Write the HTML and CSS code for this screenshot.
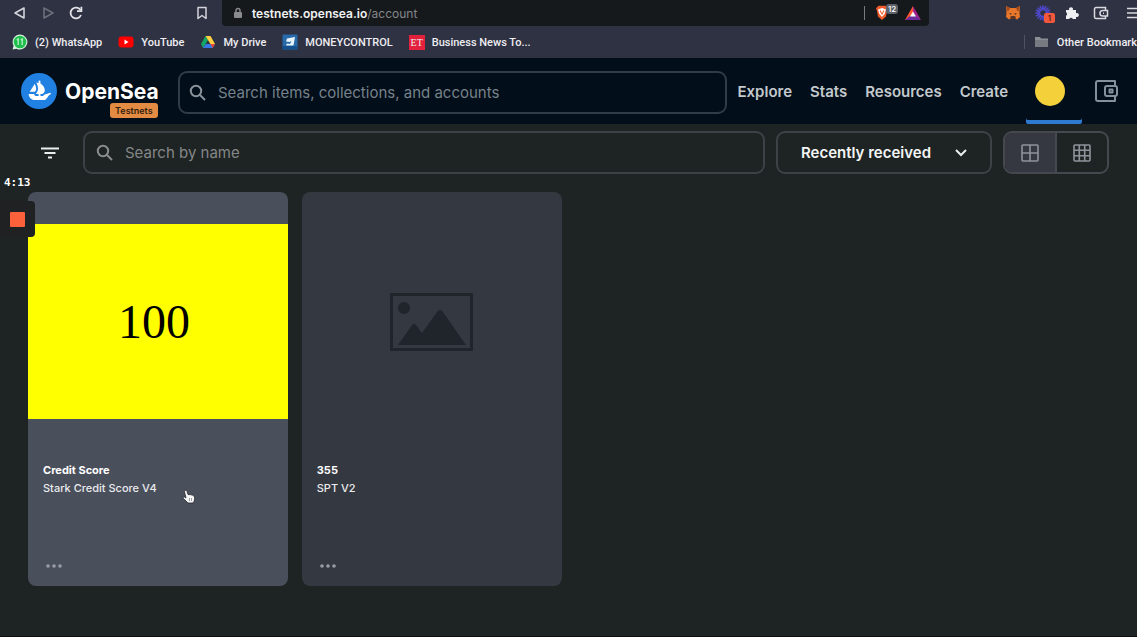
FILE: index.html
```html
<!DOCTYPE html>
<html lang="en">
<head>
<meta charset="utf-8">
<meta name="viewport" content="width=device-width, initial-scale=1">
<title>Account | OpenSea Testnets</title>
<link rel="stylesheet" href="styles.css">
</head>
<body>
<div class="browser">
  <div class="toolbar">
    <div class="history">
      <button class="tool" aria-label="Back"><svg width="14" height="14" viewBox="0 0 14 14" fill="none" stroke="#d3d4da" stroke-width="1.6" stroke-linejoin="round"><path d="M11 2v10L2 7z"/></svg></button>
      <button class="tool" aria-label="Forward"><svg width="14" height="14" viewBox="0 0 14 14" fill="none" stroke="#6c6e7b" stroke-width="1.6" stroke-linejoin="round"><path d="M3 2v10l9-5z"/></svg></button>
      <button class="tool" aria-label="Reload"><svg width="14" height="14" viewBox="0 0 14 14" fill="none" stroke="#e2e3e8" stroke-width="1.8"><path d="M12 9A5.400 5.400 0 1 1 11.500 4"/><path d="M12.400.8v4.400H8"/></svg></button>
    </div>
    <button class="tool" aria-label="Bookmark this page"><svg width="14" height="14" viewBox="0 0 14 14" fill="none" stroke="#d3d4da" stroke-width="1.5" stroke-linejoin="round"><path d="M3 1.500h8v11L7 9.500l-4 3z"/></svg></button>
    <div class="address">
      <svg width="10" height="12" viewBox="0 0 10 12"><rect x="1" y="5" width="8" height="6" rx="1" fill="#898b90"/><path d="M3 5V3.500a2 2 0 0 1 4 0V5" fill="none" stroke="#898b90" stroke-width="1.4"/></svg>
      <span class="url"><span class="host">testnets.opensea.io</span>/account</span>
      <span class="divider"></span>
      <span class="shield">
        <svg width="14" height="16" viewBox="0 0 14 16"><path d="M3.500.8h7L13 3.200l-.8 2L11 11.500 7 15 3 11.500 1.800 5.200 1 3.200z" fill="#f05a2b"/><path d="M3 4.500 7 3l4 1.500-1.300 4.300L7 12 4.300 8.800z" fill="#fff"/><path d="m5 5.500 2 3.700 2-3.700" fill="none" stroke="#f05a2b" stroke-width="1.100"/></svg>
        <span class="count">12</span>
      </span>
      <svg width="16" height="14" viewBox="0 0 16 14"><path d="M8 0 0 14h8z" fill="#ff5631"/><path d="m8 0 8 14-8-4z" fill="#a2218d"/><path d="M0 14h16l-5-4H5z" fill="#6b2b9a"/><path d="m8 5.500 3 5H5z" fill="#fff"/></svg>
    </div>
    <div class="extensions">
      <svg width="16" height="16" viewBox="0 0 16 16"><path d="M1 1l4 2h6l4-2-.5 7 .5 4-3 2.500-2-1H6l-2 1L1 12l.5-4z" fill="#e8762b"/><path d="M1 1l4 2-1.500 3L2 6zM15 1l-4 2 1.500 3L14 6z" fill="#a84c1c"/><path d="M6 11h4l1 2-1 1H6l-1-1z" fill="#5b3423"/><path d="M4 8l2.500.5-.5 1.500zM12 8l-2.500.5.5 1.500z" fill="#3a2a25"/></svg>
      <span class="burst">
        <svg width="16" height="16" viewBox="0 0 16 16" fill="none" stroke="#4f49cf" stroke-width="1.600" stroke-linecap="round"><circle cx="8" cy="8" r="3.500"/><path d="M8 1v3M8 12v3M1 8h3M12 8h3M3 3l2 2M11 11l2 2M13 3l-2 2M5 11l-2 2M5.300 1.500l1.200 2.500M10.700 1.500 9.500 4M1.500 5.300 4 6.500M1.500 10.700 4 9.500M14.500 5.300 12 6.500M5.300 14.500 6.500 12"/></svg>
        <span class="alert">1</span>
      </span>
      <svg width="14" height="14" viewBox="0 0 14 14" fill="#eeeff2"><path d="M1 4h3.200a2 2 0 1 1 3.600 0H11v3.200a2 2 0 1 1 0 3.600V13H7.800a2 2 0 0 0-3.600 0H1V9.800a2 2 0 0 0 0-3.600z"/></svg>
      <svg width="16" height="14" viewBox="0 0 16 14" fill="none" stroke="#d9dae0" stroke-width="1.500"><path d="M12.500 4.500V1.500H3A1.500 1.500 0 0 0 1.500 3v8A1.500 1.500 0 0 0 3 12.500h9.500V10"/><path d="M14.500 4.500V10H9.700a2.700 2.700 0 0 1 0-5.500z"/><path d="M10 7.200h1"/></svg>
      <svg class="menu" width="12" height="14" viewBox="0 0 12 14" stroke="#d9dae0" stroke-width="1.500"><path d="M0 2.500h12M0 7h12M0 11.500h12"/></svg>
    </div>
  </div>
  <nav class="bookmarks" aria-label="Bookmarks">
    <a href="#"><svg width="16" height="16" viewBox="0 0 16 16"><path d="M8 .5A7.500 7.500 0 1 1 4.500 14.700L.6 15.500l1-3.800A7.500 7.500 0 0 1 8 .5z" fill="#d8f5df"/><circle cx="8" cy="8" r="6.300" fill="#22bf4e"/><path d="m4.800 6 1.400-1v6M8.800 6l1.400-1v6" fill="none" stroke="#b9f3c8" stroke-width="1.200"/></svg>(2) WhatsApp</a>
    <a href="#"><svg width="16" height="16" viewBox="0 0 16 16"><rect y="2.500" x=".5" width="15" height="11" rx="3" fill="#f00"/><path d="m6.500 5.500 4 2.500-4 2.500z" fill="#fff"/></svg>YouTube</a>
    <a href="#"><svg width="16" height="16" viewBox="0 0 16 16"><path d="M5.500 2 1 10l2 4 5-8z" fill="#16a765"/><path d="M5.500 2h5L15 10h-4.600z" fill="#ffcf42"/><path d="M5.600 10H15l-2.300 4H3z" fill="#3777e3"/><path d="M12.700 14 10.400 10H15z" fill="#ea4335"/></svg>My Drive</a>
    <a href="#"><svg width="16" height="16" viewBox="0 0 16 16"><rect x=".5" y=".5" width="15" height="15" rx="1" fill="#286baa"/><path d="M.5 12h15v3.500H.5z" fill="#14518c"/><path d="M5 4.500 13 3l-1.500 8.500H4l1-2 3 .5 1.500-3-2 1-3.500-.5z" fill="#e9f3fa"/></svg>MONEYCONTROL</a>
    <a href="#"><span class="et">ET</span>Business News To...</a>
    <a href="#" class="other"><svg width="16" height="14" viewBox="0 0 16 14"><path d="M1 2h5l1 1.500h7V12H1z" fill="#8b8e95"/><path d="M1 5h13v7H1z" fill="#777a81"/></svg>Other Bookmark</a>
  </nav>
</div>

<header class="site-header">
  <a href="#" class="brand">
    <svg class="brand-logo" width="36" height="36" viewBox="0 0 90 90"><circle cx="45" cy="45" r="45" fill="#2081e2"/><g fill="#fff"><path d="m22.200 46.500 12-18.700c.2-.3.500-.3.700.1 2 4.400 3.600 9.800 2.800 13.200-.4 1.600-1.600 4-2.800 5.900H22.500c-.3 0-.5-.3-.3-.5z"/><path d="M74.400 49.900v2.900c0 .2-.1.300-.3.400-.9.400-4 1.800-5.200 3.600-3.300 4.500-5.800 11-11.400 11H34.200c-8.300 0-15-6.700-15-15v-.2c0-.2.200-.4.400-.4h13c.3 0 .5.200.5.500-.1.800 0 1.700.4 2.500.8 1.500 2.400 2.500 4.100 2.500H44v-5h-6.400c-.3 0-.5-.4-.3-.6 1.700-2.500 5.300-8.500 5.300-13 0-6-2.200-11.300-4.500-15.600l5.900 1.700v-4a2.300 2.300 0 0 1 4.600 0v5.300c5.500 3.800 11 9.700 11 16.500 0 4.500-3.800 8.300-6.300 9.700h-4.700v5h4c.9 0 2.500-.2 3.300-1 .4-.4 1.700-1.500 3.200-3.200l15-4.300c.2 0 .3.200.3.700z"/></g></svg>
    <span class="brand-name">OpenSea<span class="badge">Testnets</span></span>
  </a>
  <label class="field global-search">
    <svg width="20" height="20" viewBox="0 0 20 20" fill="none" stroke="#8a939b" stroke-width="2"><circle cx="8" cy="8" r="5.200"/><path d="m12 12 5 5"/></svg>
    <input type="text" aria-label="Search OpenSea" placeholder="Search items, collections, and accounts">
  </label>
  <nav class="site-nav" aria-label="Main">
    <a href="#">Explore</a>
    <a href="#">Stats</a>
    <a href="#">Resources</a>
    <a href="#">Create</a>
  </nav>
  <a href="#" class="profile" aria-label="Account"><span class="avatar"></span></a>
  <button class="wallet" aria-label="Wallet"><svg width="24" height="24" viewBox="0 0 24 24" fill="none" stroke="#84919b" stroke-width="2" stroke-linejoin="round"><path d="M21 7V2H4a2 2 0 0 0-2 2v16a2 2 0 0 0 2 2h17v-5"/><rect x="11" y="7" width="12" height="10" rx="2"/><path d="M15.500 10.500h3v3h-3z"/></svg></button>
</header>

<main class="content">
  <div class="filters">
    <button class="filter" aria-label="Filter"><svg width="18" height="12" viewBox="0 0 18 12" stroke="#e9eded" stroke-width="2"><path d="M0 1.500h18M3.500 6h11M7 10.500h4"/></svg></button>
    <label class="field name-search">
      <svg width="20" height="20" viewBox="0 0 20 20" fill="none" stroke="#8a8d8e" stroke-width="2"><circle cx="8" cy="8" r="5.200"/><path d="m12 12 5 5"/></svg>
      <input type="text" aria-label="Search by name" placeholder="Search by name">
    </label>
    <div class="sort">
      <select aria-label="Sort by"><option>Recently received</option></select>
      <svg width="12" height="8" viewBox="0 0 12 8" fill="none" stroke="#e9eded" stroke-width="2"><path d="m1 1 5 5 5-5"/></svg>
    </div>
    <div class="views">
      <button class="view active" aria-label="Large grid" aria-pressed="true"><svg width="18" height="18" viewBox="0 0 18 18" fill="none" stroke="#8f949c" stroke-width="1.600"><rect x="1" y="1" width="16" height="16" rx="1"/><path d="M9 1v16M1 9h16"/></svg></button>
      <button class="view" aria-label="Small grid" aria-pressed="false"><svg width="18" height="18" viewBox="0 0 18 18" fill="none" stroke="#8f949c" stroke-width="1.600"><rect x="1" y="1" width="16" height="16" rx="1"/><path d="M6.300 1v16M11.700 1v16M1 6.300h16M1 11.700h16"/></svg></button>
    </div>
  </div>

  <section class="cards" aria-label="Collected items">
    <article class="card hovered">
      <div class="media"><div class="score">100</div></div>
      <div class="info">
        <h2>Credit Score</h2>
        <p>Stark Credit Score V4</p>
        <button class="more" aria-label="More options"><svg width="16" height="4" viewBox="0 0 16 4" fill="#9a9da5"><circle cx="2" cy="2" r="1.800"/><circle cx="8" cy="2" r="1.800"/><circle cx="14" cy="2" r="1.800"/></svg></button>
      </div>
      <svg class="cursor" width="14" height="16" viewBox="0 0 14 16"><path d="M3 1.500c1-.6 1.700 0 2 .8l1 3.200c3 0 6 .5 6.500 2.500.3 2 .2 4-1.500 6H6L1.200 9.200c-.5-.9.500-1.600 1.300-1.200L4 9 2.500 3c-.2-.7 0-1.200.5-1.500z" fill="#f5f5f5" stroke="#24262b" stroke-width=".8"/><path d="M7.500 9v3M9.500 9v3" stroke="#777b84" stroke-width=".7"/></svg>
    </article>
    <article class="card">
      <div class="media"><svg width="83" height="58" viewBox="0 0 83 58"><rect x="1.500" y="1.500" width="80" height="55" fill="none" stroke="#20252b" stroke-width="3"/><circle cx="14" cy="15" r="6" fill="#20252b"/><path d="m8 52 14-20q2-3 4 0l6 8 15-21q3-4 6 0l23 33z" fill="#20252b"/></svg></div>
      <div class="info">
        <h2>355</h2>
        <p>SPT V2</p>
        <button class="more" aria-label="More options"><svg width="16" height="4" viewBox="0 0 16 4" fill="#9a9da5"><circle cx="2" cy="2" r="1.800"/><circle cx="8" cy="2" r="1.800"/><circle cx="14" cy="2" r="1.800"/></svg></button>
      </div>
    </article>
  </section>
</main>

<div class="recorder">
  <span class="time">4:13</span>
  <button class="stop" aria-label="Stop recording"><span></span></button>
</div>
</body>
</html>
```
FILE: styles.css
```css
* { box-sizing: border-box; }
body {
  margin: 0;
  min-height: 100vh;
  overflow-x: hidden;
  background: #1e2323;
  color: #fff;
  font-family: Inter, "Open Sans", sans-serif;
  border-bottom: 1px solid #0b0e0f;
}
button { margin: 0; padding: 0; border: 0; background: none; color: inherit; font: inherit; }
a { color: inherit; text-decoration: none; }
svg { display: block; flex: none; }

/* browser window */
.browser { height: 58px; background: #2f3242; overflow: hidden; font-size: 11px; font-weight: 500; }
.toolbar { display: flex; align-items: center; height: 26px; }
.history { display: flex; gap: 14px; padding-left: 13px; margin-right: 112px; }
.address {
  display: flex;
  align-items: center;
  flex: 1;
  height: 26px;
  margin-left: 13px;
  padding: 0 8px 0 11px;
  border-radius: 0 0 4px 4px;
  background: #16191c;
}
.url { flex: 1; margin-left: 9px; font-size: 12px; font-weight: 400; color: #85878b; }
.host { color: #f1f2f3; font-weight: 600; }
.divider { width: 1px; height: 14px; margin-right: 10px; background: #777a80; }
.shield { position: relative; margin-right: 16px; }
.count {
  position: absolute;
  left: 11px;
  top: -1px;
  padding: 0 2px;
  border-radius: 3px;
  background: #5c616b;
  font-size: 8px;
  line-height: 10px;
}
.extensions { display: flex; align-items: center; gap: 14px; margin-left: 76px; width: 132px; overflow: hidden; height: 26px; }
.extensions .menu { margin-left: 4px; }
.burst { position: relative; }
.alert {
  position: absolute;
  left: 9px;
  top: 8px;
  width: 11px;
  border-radius: 2px;
  background: #f1583c;
  color: #47150d;
  text-align: center;
  font-size: 8px;
  line-height: 10px;
}
.bookmarks {
  display: flex;
  align-items: center;
  gap: 16px;
  height: 32px;
  padding-left: 12px;
  white-space: nowrap;
  color: #eeeef2;
  font-family: Roboto, sans-serif;
  font-size: 11px;
}
.bookmarks a { display: flex; align-items: center; gap: 7px; flex: none; }
.et { width: 16px; background: #e3213c; font: 10px/15px "Liberation Serif", serif; text-align: center; }
.bookmarks .other { margin-left: auto; padding-left: 9px; border-left: 1px solid #50525f; }

/* site header */
.site-header { display: flex; align-items: center; height: 66px; padding: 0 19px 0 21px; background: #020e19; }
.brand { display: flex; align-items: center; gap: 8px; width: 157px; }
.brand-name { position: relative; font-size: 21px; font-weight: 700; }
.badge {
  position: absolute;
  right: 1px;
  top: 24px;
  padding: 0 5px;
  border-radius: 3px;
  background: #e38b42;
  color: #33200f;
  font-size: 9px;
  font-weight: 600;
  line-height: 15px;
}
.field { display: flex; align-items: center; gap: 10px; height: 43px; padding: 0 10px; border: 2px solid #3d4246; border-radius: 9px; }
.field input { flex: 1; min-width: 0; padding: 0; border: 0; outline: 0; background: none; color: #fff; font: 400 15px/20px Inter, sans-serif; }
.field input::placeholder { color: #858789; opacity: 1; }
.global-search { flex: 1; margin-top: 3px; padding: 0 8px; border-color: #2f3d47; }
.global-search input::placeholder { color: #77828b; }
.site-nav { display: flex; gap: 18px; padding-left: 10px; font-size: 15px; font-weight: 600; color: #c4c9cd; }
.profile { display: flex; align-items: center; justify-content: center; width: 56px; height: 66px; margin: 0 12px 0 18px; padding-right: 8px; box-shadow: inset 0 -4px #2d7ad0; border-radius: 2px; }
.avatar { width: 30px; height: 30px; border-radius: 50%; background: #f4d03a; }

/* filter bar */
.content { padding: 7px 28px 50px; }
.filters { display: flex; align-items: center; height: 43px; }
.filter { display: grid; place-items: center; width: 44px; height: 43px; margin-right: 11px; }
.name-search { flex: 1; padding: 0 10px; }
.sort { position: relative; width: 216px; margin: 0 11px; }
.sort select {
  width: 100%;
  height: 43px;
  padding: 0 23px;
  border: 2px solid #3d4246;
  border-radius: 9px;
  appearance: none;
  background: none;
  color: #f3f5f5;
  font: 600 15px/20px Inter, sans-serif;
}
.sort svg { position: absolute; right: 25px; top: 18px; pointer-events: none; }
.views { display: flex; width: 106px; height: 43px; border: 2px solid #45494f; border-radius: 9px; overflow: hidden; }
.view { display: grid; place-items: center; flex: 1; }
.view.active { background: #353840; border-right: 2px solid #45494f; }

/* item cards */
.cards { display: grid; grid-template-columns: repeat(4, 1fr); gap: 14px; margin-top: 18px; }
.card { position: relative; overflow: hidden; border-radius: 8px; background: #343840; }
.card.hovered { background: #4a4f5c; }
.media { display: grid; align-items: center; justify-items: center; aspect-ratio: 1; }
.score {
  display: grid;
  place-items: center;
  width: 100%;
  aspect-ratio: 4 / 3;
  padding-right: 8px;
  background: #ff0;
  color: #000;
  font: 48px/48px "Liberation Serif", serif;
}
.info { display: flex; flex-direction: column; align-items: flex-start; padding: 9px 15px 14px; }
.info h2, .info p { margin: 0; font-size: 11px; line-height: 18px; }
.info p { font-weight: 500; color: #e9eaed; }
.more { padding: 4px 3px; margin-top: 63px; }
.cursor { position: absolute; left: 154px; top: 297px; }

/* screen recorder overlay */
.recorder { position: absolute; left: 0; top: 176px; width: 35px; }
.time { display: block; padding-left: 4px; font: bold 11px/14px "DejaVu Sans Mono", monospace; }
.stop { display: grid; place-items: center; width: 35px; height: 36px; margin-top: 11px; border-radius: 0 4px 4px 0; background: #202123; }
.stop span { width: 15px; height: 15px; background: #fb613a; border-radius: 1px; }
```
